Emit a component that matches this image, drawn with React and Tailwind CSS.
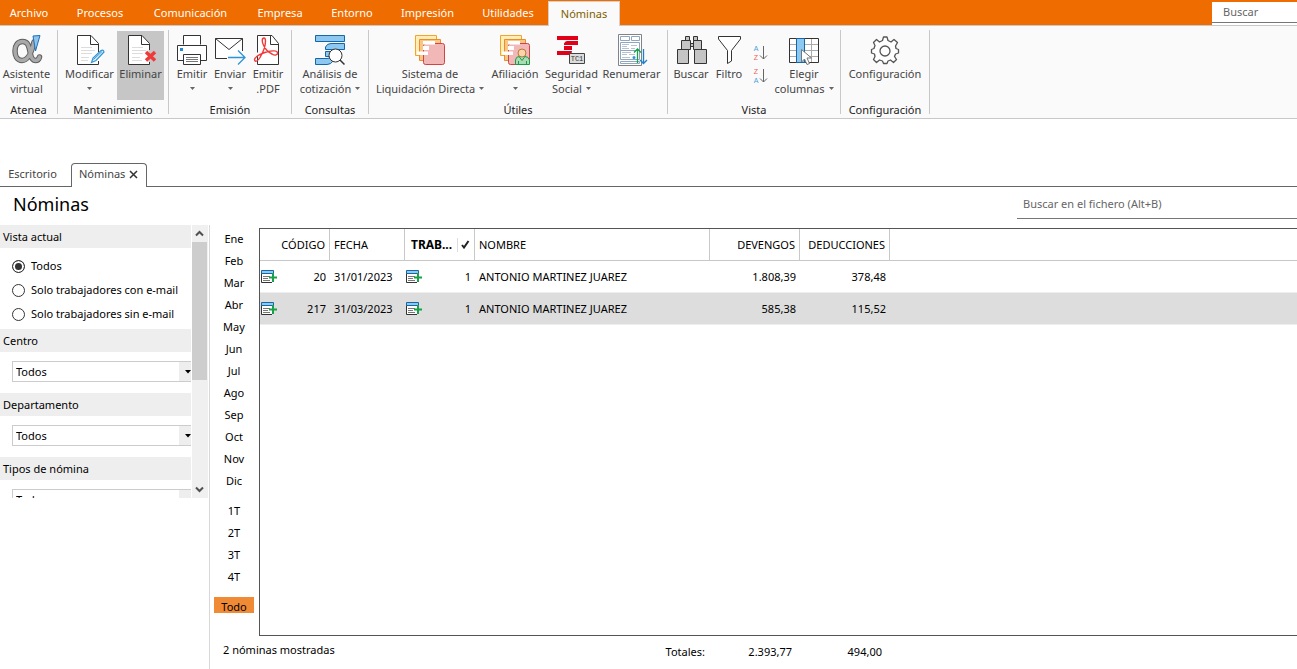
import React, { useState } from 'react';

const menus = [
  { name: 'Archivo', width: 'w-[62px] pr-1' },
  { name: 'Procesos', width: 'w-[76px]' },
  { name: 'Comunicación', width: 'w-[105px]' },
  { name: 'Empresa', width: 'w-[74px]' },
  { name: 'Entorno', width: 'w-[70px]' },
  { name: 'Impresión', width: 'w-[81px]' },
  { name: 'Utilidades', width: 'w-[80px]' },
  { name: 'Nóminas', width: 'w-[72px]' },
];

const meses = ['Ene', 'Feb', 'Mar', 'Abr', 'May', 'Jun', 'Jul', 'Ago', 'Sep', 'Oct', 'Nov', 'Dic'];
const trimestres = ['1T', '2T', '3T', '4T'];

const nominas = [
  { codigo: 20, fecha: '31/01/2023', trabajador: 1, nombre: 'ANTONIO MARTINEZ JUAREZ', devengos: '1.808,39', deducciones: '378,48' },
  { codigo: 217, fecha: '31/03/2023', trabajador: 1, nombre: 'ANTONIO MARTINEZ JUAREZ', devengos: '585,38', deducciones: '115,52' },
];

const vistas = ['Todos', 'Solo trabajadores con e-mail', 'Solo trabajadores sin e-mail'];

function Icono({ children }) {
  return (
    <svg width="30" height="30" viewBox="0 0 30 30" fill="none" className="shrink-0 overflow-visible" aria-hidden="true">
      {children}
    </svg>
  );
}

function IconoAsistente() {
  const trazo = 'M22 7C20 16 17 25.500 10 25.500C5 25.500 3 21 3 16C3 10 6 6.500 10.500 6.500C17 6.500 17 13 18.500 19C19.500 24 21 25.500 23.500 25.500C25.500 25.500 27 24 27.500 22';

  return (
    <Icono>
      <path d={trazo} stroke="#5f5f5f" strokeWidth="5.500" strokeLinecap="round" />
      <path d={trazo} stroke="#a9a9a9" strokeWidth="3.500" strokeLinecap="round" />
      <path d="M21 1L28 .500L23.500 16Z" fill="#8cc4ee" stroke="#1f6fb5" />
    </Icono>
  );
}

function Documento() {
  return (
    <>
      <path d="M2.500.500H16L23.500 8.500V29.500H2.500Z" fill="#fff" stroke="#333" />
      <path d="M15.500.500V9.500H23.500" stroke="#333" />
    </>
  );
}

function IconoModificar() {
  return (
    <Icono>
      <Documento />
      <path d="M6 12.500H17M6 15.500H20M6 18.500H17M6 22.500H14M6 25.500H13" stroke="#dcdcdc" />
      <path d="M24 17V26" stroke="#fff" strokeWidth="2" />
      <path d="M16.500 27.500L18 23L26 15.500Q28.500 14.500 29 17L21 25.500Z" fill="#e3f1fb" stroke="#2f94d6" strokeWidth="1.200" />
      <path d="M18.500 24.500L27 16.500" stroke="#2f94d6" />
    </Icono>
  );
}

function IconoEliminar() {
  return (
    <Icono>
      <Documento />
      <path d="M6 12.500H17M6 15.500H20M6 18.500H17M6 22.500H14M6 25.500H16" stroke="#dcdcdc" />
      <path d="M24 15V27" stroke="#c6c6c6" strokeWidth="3" />
      <path d="M20 17L29 25.500M29 17L20 25.500" stroke="#f03a3a" strokeWidth="3.500" />
    </Icono>
  );
}

function IconoEmitir() {
  return (
    <Icono>
      <path d="M6.500 9.500V.500H23.500V9.500" fill="#fff" stroke="#333" />
      <path d="M6.500 25.500H.500V10.500H29.500V25.500H23.500" fill="#fff" stroke="#333" />
      <path d="M6.500 19.500H23.500V29.500H6.500Z" fill="#fff" stroke="#333" />
      <path d="M9 22.500H21M9 24.500H21M9 26.500H21" stroke="#777" />
      <path d="M3 13H6V16H3Z" fill="#1f8ad0" />
    </Icono>
  );
}

function IconoEnviar() {
  return (
    <Icono>
      <path d="M12 23.500H.500V3.500H27.500V16" stroke="#333" fill="#fff" />
      <path d="M.500 3.500L14 14.500L27.500 3.500" stroke="#333" />
      <path d="M13 22.500H30M23 15.500L30 22.500L23 29.500" stroke="#2f94d6" strokeWidth="1.300" />
    </Icono>
  );
}

function IconoPdf() {
  return (
    <Icono>
      <path d="M4.500.500H19L25.500 8.500V29.500H4.500Z" fill="#fff" stroke="#333" />
      <path d="M17.500.500V9.500H25.500" stroke="#333" />
      <path d="M3 20L14 14L20 16" stroke="#fafafa" strokeWidth="3" />
      <path
        d="M11 3C8.500 3 9 7 10.500 10C12 14 15 17 19 19C22 21 25 20 24.500 17.500C24 15.500 19 15.500 15 16.500C9 18 2 21.500 1.500 24.500C1.500 27 4.500 27 7 22.500C10 17.500 12.500 11 12.500 6C12.500 4 12 3 11 3Z"
        stroke="#f03a3a"
        strokeWidth="1.400"
      />
    </Icono>
  );
}

function IconoAnalisis() {
  return (
    <Icono>
      <g fill="#8cc8f0" stroke="#1766a8">
        <path d="M.500.500H29.500V6.500H.500Z" />
        <path d="M10.500 14.500V12Q12 8.500 16 8.500H29.500V14.500Z" />
        <path d="M10.500 16.500H20.500V21.500H10.500Z" />
        <path d="M.500 23.500H12Q16 23.500 18 21.500V26Q16 29.500 12 29.500H.500Z" />
      </g>
      <circle cx="20.500" cy="20.500" r="6.500" fill="#fff" stroke="#333" />
      <path d="M25 25L29.500 29.500" stroke="#333" strokeWidth="1.500" />
    </Icono>
  );
}

function Carpetas() {
  return (
    <>
      <path d="M.500.500H21.500V20.500H.500Z" fill="#fdeeb8" stroke="#f2a52a" />
      <path d="M4.500 4.500H25.500V25.500H4.500Z" fill="#f9c784" stroke="#ee8c2b" />
      <rect x="8.500" y="8.500" width="21" height="21" rx="2" fill="#f2b8b8" stroke="#cf4444" />
      <path d="M4 6H20V9.500H8V6M8 11H14V15H8ZM2 16.500H13V20H2Z" fill="#fff" />
    </>
  );
}

function IconoSistema() {
  return (
    <Icono>
      <Carpetas />
    </Icono>
  );
}

function IconoAfiliacion() {
  return (
    <Icono>
      <Carpetas />
      <path d="M15.500 29.500V25Q16 21.500 19 21.500H25Q28.500 21.500 29.500 25V29.500Z" fill="#a8dcb4" stroke="#1f9a4c" />
      <path d="M18.500 29.500V26M26.500 29.500V26M19 21.500L22 25.500L25 21.500" stroke="#1f9a4c" />
      <circle cx="22" cy="18" r="4" fill="#fbd5a8" stroke="#b9773a" />
    </Icono>
  );
}

function IconoSeguridad() {
  return (
    <Icono>
      <path d="M0 1H21V5H0ZM7 10V8.500Q8 6 10 6H21V10ZM7 11H15V15H7ZM0 16H15Q14.500 20 12 20H0Z" fill="#e1001a" />
      <path d="M12.500 18.500H27.500V28.500H12.500Z" fill="#dcdcdc" stroke="#444" />
      <text x="20" y="26" textAnchor="middle" fill="#333" fontSize="7" fontFamily="Liberation Mono, monospace">TC1</text>
    </Icono>
  );
}

function IconoRenumerar() {
  return (
    <Icono>
      <path d="M1.500-.500H24.500V30.500H1.500Z" fill="#fff" stroke="#7f8488" />
      <path d="M3.500 1.500H12.500V5.500H3.500ZM14.500 1.500H22.500V5.500H14.500ZM3.500 7.500H22.500V15.500H3.500ZM3.500 15.500H22.500V24.500H3.500ZM3.500 26.500H22.500V28.500H3.500Z" stroke="#8fa6be" />
      <path d="M5 9.500H12M14 10.500H20M5 11.500H10M5 13.500H12M14 13.500H18M5 17.500H14M5 19.500H10M12 19.500H18M5 22.500H13" stroke="#b4c2d2" />
      <path d="M20.500 28V14M17 17.500L20.500 14L24 17.500" stroke="#18a04a" strokeWidth="1.300" />
      <path d="M26.500 14V28.500M23 25L26.500 28.500L30 25" stroke="#1f7fc8" strokeWidth="1.300" />
      <circle cx="17" cy="22.500" r="1.500" fill="#2f94d6" />
    </Icono>
  );
}

function IconoBuscar() {
  return (
    <Icono>
      <g fill="#c4c4c4" stroke="#333">
        <path d="M9.500 1.500H13.500V5.500H9.500ZM17.500 1.500H21.500V5.500H17.500Z" />
        <path d="M13 8.500H18V11.500H13Z" />
        <path d="M5.500 5.500H14.500V14.500H5.500ZM17.500 5.500H25.500V14.500H17.500Z" />
        <path d="M1.500 14.500H12.500V28.500H1.500ZM18.500 14.500H30.500V28.500H18.500Z" />
      </g>
    </Icono>
  );
}

function IconoFiltro() {
  return (
    <Icono>
      <path d="M4.500 1.500H26.500V4L17.500 15.500V26L13.500 28.500V15.500L4.500 4Z" fill="#fff" stroke="#333" />
    </Icono>
  );
}

function IconoOrden({ arriba, abajo, colorArriba, colorAbajo }) {
  return (
    <svg width="16" height="20" viewBox="0 0 16 20" fill="none" aria-hidden="true">
      <text x="4" y="8" textAnchor="middle" fontSize="7" fontFamily="Liberation Sans, sans-serif" fill={colorArriba}>{arriba}</text>
      <text x="4" y="17" textAnchor="middle" fontSize="7" fontFamily="Liberation Sans, sans-serif" fill={colorAbajo}>{abajo}</text>
      <path d="M11.500 3V16M8 12.500L11.500 16L15 12.500" stroke="#666" />
    </svg>
  );
}

function IconoColumnas() {
  return (
    <Icono>
      <path d="M.500 3.500H29.500V27.500H.500Z" fill="#fff" stroke="#333" />
      <path d="M1 9.500H29M1 15.500H29M1 21.500H29M22.500 4V27" stroke="#aaa" />
      <path d="M7.500 3.500H15.500V27.500H7.500Z" fill="#8cc8f0" stroke="#1766a8" />
      <path d="M12.500 14.500V27L15.500 24L18 29.500L20.500 28.500L18 23H22.500Z" fill="#fff" stroke="#777" />
    </Icono>
  );
}

function IconoConfiguracion() {
  return (
    <Icono>
      <path
        d="M12.500 5.500L13.500 2H17L18 5.500L21 7L24 4.500L27.500 7.500L25.500 11L26 13.500L28.500 14.500V18L25.500 19L24.500 21.500L26.500 24.500L23.500 27.500L20.500 25L18 26L17 28.500H13.500L12.500 26L9.500 25L6.500 27.500L3.500 24.500L5 21.500L4.500 19L1.500 18V14.500L4 13.500L5 10.500L3.500 7.500L6.500 4.500L9.500 7Z"
        stroke="#555"
        strokeLinejoin="round"
        strokeWidth="1.300"
        fill="#fff"
      />
      <circle cx="15" cy="16" r="5" stroke="#555" strokeWidth="1.300" />
    </Icono>
  );
}

function Flecha() {
  return (
    <svg width="5" height="3" viewBox="0 0 5 3" className="inline-block align-middle" aria-hidden="true">
      <path d="M0 0H5L2.500 3Z" fill="#666" />
    </svg>
  );
}

function Boton({ icono, lineas, menu, width, activo }) {
  return (
    <button
      type="button"
      className={`${width} h-[69px] shrink-0 pt-1 flex flex-col items-center text-[11px] leading-[15px] text-[#444] ${activo ? 'bg-[#c6c6c6]' : ''}`}
    >
      {icono}
      <span className="mt-px whitespace-nowrap">{lineas[0]}</span>
      {(lineas[1] || menu) && (
        <span className="flex items-center gap-1 whitespace-nowrap h-[15px]">
          {lineas[1]}
          {menu && <Flecha />}
        </span>
      )}
    </button>
  );
}

function Grupo({ titulo, compacto, children }) {
  return (
    <>
      <section className="shrink-0 pt-px">
        <div className={`flex ${compacto ? 'pr-1' : 'px-1'}`}>{children}</div>
        <h2 className="mt-[3px] text-center text-[11px] leading-[14px] text-[#222]">{titulo}</h2>
      </section>
      <div className="w-px h-[84px] shrink-0 bg-[#c8c8c8]" />
    </>
  );
}

function Cinta() {
  return (
    <div className="flex items-start h-[93px] pt-1 bg-[#fafafa] border-b border-[#c8c8c8]">
      <Grupo titulo="Atenea" compacto>
        <Boton icono={<IconoAsistente />} lineas={['Asistente', 'virtual']} width="w-[53px]" />
      </Grupo>
      <Grupo titulo="Mantenimiento">
        <Boton icono={<IconoModificar />} lineas={['Modificar']} menu width="w-[55px]" />
        <Boton icono={<IconoEliminar />} lineas={['Eliminar']} width="w-[47px]" activo />
      </Grupo>
      <Grupo titulo="Emisión">
        <Boton icono={<IconoEmitir />} lineas={['Emitir']} menu width="w-[38px]" />
        <Boton icono={<IconoEnviar />} lineas={['Enviar']} menu width="w-[38px]" />
        <Boton icono={<IconoPdf />} lineas={['Emitir', '.PDF']} width="w-[38px]" />
      </Grupo>
      <Grupo titulo="Consultas">
        <Boton icono={<IconoAnalisis />} lineas={['Análisis de', 'cotización']} menu width="w-[68px]" />
      </Grupo>
      <Grupo titulo="Útiles">
        <Boton icono={<IconoSistema />} lineas={['Sistema de', 'Liquidación Directa']} menu width="w-[114px]" />
        <Boton icono={<IconoAfiliacion />} lineas={['Afiliación']} menu width="w-[56px]" />
        <Boton icono={<IconoSeguridad />} lineas={['Seguridad', 'Social']} menu width="w-[57px]" />
        <Boton icono={<IconoRenumerar />} lineas={['Renumerar']} width="w-[63px]" />
      </Grupo>
      <Grupo titulo="Vista">
        <Boton icono={<IconoBuscar />} lineas={['Buscar']} width="w-[38px]" />
        <Boton icono={<IconoFiltro />} lineas={['Filtro']} width="w-[38px]" />
        <div className="w-6 shrink-0 pt-3 flex flex-col items-center gap-[3px]">
          <button type="button" aria-label="Orden ascendente">
            <IconoOrden arriba="A" abajo="Z" colorArriba="#4a9fd8" colorAbajo="#ee5a5a" />
          </button>
          <button type="button" aria-label="Orden descendente">
            <IconoOrden arriba="Z" abajo="A" colorArriba="#ee5a5a" colorAbajo="#4a9fd8" />
          </button>
        </div>
        <Boton icono={<IconoColumnas />} lineas={['Elegir', 'columnas']} menu width="w-[64px]" />
      </Grupo>
      <Grupo titulo="Configuración">
        <Boton icono={<IconoConfiguracion />} lineas={['Configuración']} width="w-[80px]" />
      </Grupo>
    </div>
  );
}

function Filtro({ titulo, id }) {
  return (
    <div className="mb-[11px]">
      <label htmlFor={id} className="block bg-[#eee] pl-[3px] text-[11px] leading-[23px]">{titulo}</label>
      <div className="relative mt-[9px] ml-3">
        <select id={id} className="block w-full h-[21px] appearance-none bg-white border border-r-0 border-[#ccc] pl-[3px] text-[11px] leading-[19px]">
          <option>Todos</option>
        </select>
        <span className="absolute right-0 inset-y-px w-3 bg-[#eee] flex items-center justify-end pointer-events-none">
          <svg width="6" height="4" viewBox="0 0 6 4" aria-hidden="true">
            <path d="M0 0H6L3 3.500Z" fill="#000" />
          </svg>
        </span>
      </div>
    </div>
  );
}

function Chevron({ arriba }) {
  return (
    <svg width="9" height="7" viewBox="0 0 9 7" fill="none" aria-hidden="true">
      <path d={arriba ? 'M1 5.500L4.500 2L8 5.500' : 'M1 1.500L4.500 5L8 1.500'} stroke="#505050" strokeWidth="2" />
    </svg>
  );
}

function PanelFiltros() {
  const [vista, setVista] = useState('Todos');

  return (
    <div className="w-[210px] shrink-0 border-r border-[#d8d8d8]">
      <div className="flex h-[273px] overflow-hidden">
        <div className="w-[191px]">
          <h2 className="bg-[#eee] pl-[3px] text-[11px] leading-[23px]">Vista actual</h2>
          <div className="pt-1.5 pb-[3px]">
            {vistas.map((v) => (
              <label key={v} className="flex items-center gap-1.5 h-6 pl-3 text-[11px]">
                <input
                  type="radio"
                  name="vista"
                  checked={vista === v}
                  onChange={() => setVista(v)}
                  className="appearance-none w-[13px] h-[13px] rounded-full border border-[#333] bg-white checked:bg-[#333] shadow-[inset_0_0_0_2px_white]"
                />
                {v}
              </label>
            ))}
          </div>
          <Filtro titulo="Centro" id="centro" />
          <Filtro titulo="Departamento" id="departamento" />
          <Filtro titulo="Tipos de nómina" id="tipos" />
        </div>
        <div className="ml-px w-4 flex flex-col bg-[#f0f0f0]">
          <button type="button" aria-label="Subir" className="w-[15px] h-[17px] flex items-center justify-center">
            <Chevron arriba />
          </button>
          <div className="h-[138px] w-[15px] bg-[#cdcdcd]" />
          <button type="button" aria-label="Bajar" className="mt-auto w-[15px] h-[17px] flex items-center justify-center">
            <Chevron />
          </button>
        </div>
      </div>
    </div>
  );
}

function Periodos() {
  return (
    <div className="w-[49px] shrink-0 pt-[3px] pl-1 flex flex-col items-start text-[11px] leading-[22px]">
      {meses.map((m) => (
        <button key={m} type="button" className="w-10">{m}</button>
      ))}
      <div className="h-2" />
      {trimestres.map((t) => (
        <button key={t} type="button" className="w-10">{t}</button>
      ))}
      <button type="button" className="mt-[9px] w-10 h-4 pt-1 bg-[#f08a35] leading-3">Todo</button>
    </div>
  );
}

function IconoFila() {
  return (
    <svg width="17" height="13" viewBox="0 0 17 13" fill="none" className="shrink-0" aria-hidden="true">
      <path d="M1 4H12V12H1Z" fill="#fff" />
      <path d="M.500 3V12.500H11" stroke="#333" />
      <path d="M.500.500H12.500V3.500H.500Z" fill="#8cc8f0" stroke="#1766a8" />
      <path d="M2 6.500H9M2 8.500H7M2 10.500H9" stroke="#777" />
      <path d="M12 3V12M8 7.500H16" stroke="#18a04a" strokeWidth="2" />
    </svg>
  );
}

function Tabla() {
  const th = 'h-8 border-r border-b border-[#c8c8c8] px-1 font-normal';

  return (
    <table className="w-full table-fixed border-separate border-spacing-0 text-[11px] leading-4">
      <colgroup>
        <col className="w-[70px]" />
        <col className="w-[75px]" />
        <col className="w-[70px]" />
        <col className="w-[235px]" />
        <col className="w-[90px]" />
        <col className="w-[90px]" />
        <col />
      </colgroup>
      <thead>
        <tr>
          <th className={`${th} text-right`}>CÓDIGO</th>
          <th className={`${th} text-left`}>FECHA</th>
          <th className={th}>
            <div className="flex items-center justify-between pl-0.5 text-[12px] font-bold">
              TRAB...
              <span className="h-3.5 border-l border-[#ddd] pl-[3px] flex items-center">
                <svg width="9" height="9" viewBox="0 0 9 9" fill="none" aria-hidden="true">
                  <path d="M1 5L3 7.500L7.500 1" stroke="#222" strokeWidth="2" />
                </svg>
              </span>
            </div>
          </th>
          <th className={`${th} text-left`}>NOMBRE</th>
          <th className={`${th} text-right`}>DEVENGOS</th>
          <th className={`${th} text-right`}>DEDUCCIONES</th>
          <th className="h-8 border-b border-[#c8c8c8]" />
        </tr>
      </thead>
      <tbody>
        {nominas.map((n, i) => (
          <tr key={n.codigo} className={`${i === 1 ? 'bg-[#ddd]' : 'bg-white'} [&>td]:h-8 [&>td]:border-b [&>td]:border-[#eee]`}>
            <td className="pl-px pr-1">
              <div className="flex items-center justify-between"><IconoFila />{n.codigo}</div>
            </td>
            <td className="pl-1">{n.fecha}</td>
            <td className="pl-px pr-1">
              <div className="flex items-center justify-between"><IconoFila />{n.trabajador}</div>
            </td>
            <td className="pl-1">{n.nombre}</td>
            <td className="pr-1 text-right">{n.devengos}</td>
            <td className="pr-1 text-right">{n.deducciones}</td>
            <td />
          </tr>
        ))}
      </tbody>
    </table>
  );
}

export default function App() {
  return (
    <div className="min-h-screen flex flex-col bg-white text-black overflow-hidden font-['Noto_Sans','Open_Sans',sans-serif]">
      <header className="flex justify-between h-[26px] bg-[#ee6c00] border-b border-[#c8c8c8]">
        <nav className="flex pt-px">
          {menus.map((m) => (
            <button
              key={m.name}
              type="button"
              className={`${m.width} h-[25px] text-[11px] ${m.name === 'Nóminas' ? 'bg-[#fafafa] border border-b-0 border-[#d8d0c8] text-[#806000]' : 'text-white'}`}
            >
              {m.name}
            </button>
          ))}
        </nav>
        <div className="w-[85px] mt-0.5 bg-white">
          <input
            type="text"
            aria-label="Buscar"
            placeholder="Buscar"
            className="block w-full h-[21px] pl-[11px] pb-0.5 text-[11px] border-b border-[#777] outline-none placeholder:text-[#666]"
          />
        </div>
      </header>

      <Cinta />

      <div className="mt-11 flex items-end h-6 border-b border-[#666] text-[11px] text-[#444]">
        <button type="button" className="w-[71px] h-6 pr-1.5 text-center">Escritorio</button>
        <div className="-mb-px w-[76px] h-6 flex items-center gap-1 pl-[7px] pb-0.5 bg-white border border-b-0 border-[#666] rounded-t-[4px]">
          Nóminas
          <button type="button" aria-label="Cerrar">
            <svg width="9" height="9" viewBox="0 0 9 9" fill="none" aria-hidden="true">
              <path d="M1 1L8 8M8 1L1 8" stroke="#333" strokeWidth="1.500" />
            </svg>
          </button>
        </div>
      </div>

      <div className="flex justify-between h-[38px] pl-[13px]">
        <h1 className="text-[18px] leading-[34px]">Nóminas</h1>
        <input
          type="text"
          aria-label="Buscar en el fichero"
          placeholder="Buscar en el fichero (Alt+B)"
          className="w-[280px] h-8 pl-1.5 pt-0.5 text-[11px] border-b border-[#777] outline-none placeholder:text-[#666]"
        />
      </div>

      <main className="flex-1 flex">
        <PanelFiltros />
        <div className="flex-1 flex flex-col min-w-0">
          <div className="flex-1 flex">
            <Periodos />
            <div className="flex-1 min-w-0 mt-[3px] border border-r-0 border-[#555]">
              <Tabla />
            </div>
          </div>
          <footer className="flex h-[33px] text-[11px] leading-[31px]">
            <span className="w-[443px] pl-[13px] leading-7">2 nóminas mostradas</span>
            <span className="w-[52px] text-right">Totales:</span>
            <span className="w-[87px] text-right">2.393,77</span>
            <span className="w-[90px] text-right">494,00</span>
          </footer>
        </div>
      </main>
    </div>
  );
}
